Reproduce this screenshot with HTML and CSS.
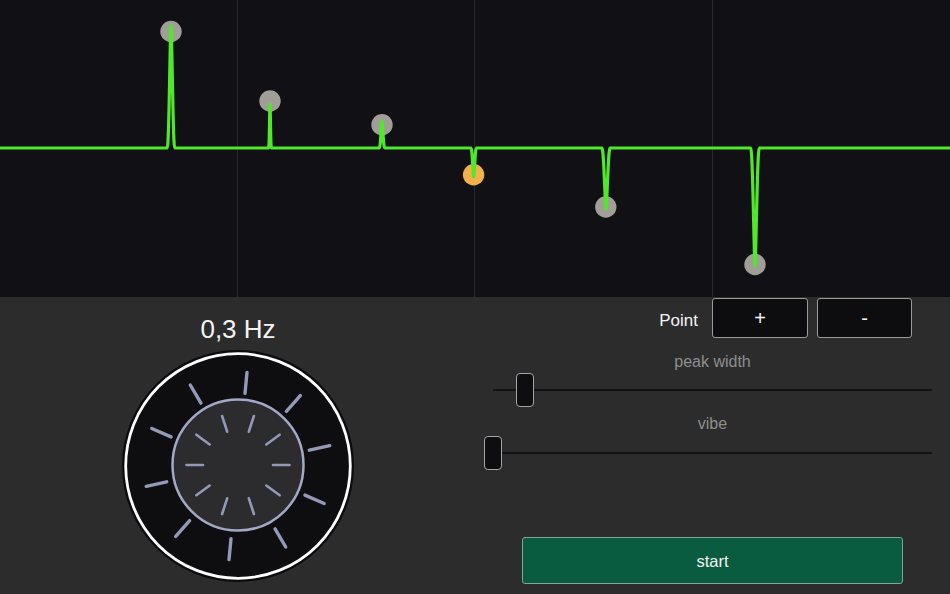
FILE: index.html
```html
<!DOCTYPE html>
<html>
<head>
<meta charset="utf-8">
<link rel="stylesheet" href="styles.css">
</head>
<body>
<div class="app">
  <div class="graph">
    <svg class="graph-svg" width="950" height="297" viewBox="0 0 950 297">
      <line class="grid" x1="237.5" y1="0" x2="237.5" y2="297"/>
      <line class="grid" x1="474.5" y1="0" x2="474.5" y2="297"/>
      <line class="grid" x1="712.5" y1="0" x2="712.5" y2="297"/>
      <circle class="pt" cx="171" cy="31.5" r="10.7"/>
      <circle class="pt" cx="270" cy="101" r="10.7"/>
      <circle class="pt" cx="382" cy="124.8" r="10.7"/>
      <circle class="pt active" cx="473.6" cy="174.8" r="10.7"/>
      <circle class="pt" cx="605.8" cy="207" r="10.7"/>
      <circle class="pt" cx="755" cy="264.5" r="10.7"/>
      <path class="wave" d="M-2,148 L167.3,148 C169,148 170.2,26 171,26 C171.8,26 173,148 174.7,148
        L268.6,148 C269.4,148 269.7,104 270,104 C270.3,104 270.6,148 271.4,148
        L379.4,148 C380.6,148 381.4,121 382,121 C382.6,121 383.4,148 384.6,148
        L471.1,148 C472.3,148 473.1,177 473.7,177 C474.3,177 475.1,148 476.3,148
        L602,148 C603.8,148 605.2,209 606,209 C606.8,209 608.2,148 610,148
        L750.8,148 C752.7,148 754.2,266 755,266 C755.8,266 757.3,148 759.2,148
        L952,148"/>
    </svg>
  </div>
  <div class="panel">
    <div class="left">
      <div class="freq">0,3 Hz</div>
      <svg class="knob" width="236" height="236" viewBox="0 0 236 236">
        <circle class="knob-edge" cx="118" cy="118" r="116"/>
        <circle class="knob-ring" cx="118" cy="118" r="112.3"/>
        <g class="ticks-outer">
          <line x1="118" y1="45" x2="118" y2="24" transform="rotate(5.5 118 118)"/>
          <line x1="118" y1="45" x2="118" y2="24" transform="rotate(41.5 118 118)"/>
          <line x1="118" y1="45" x2="118" y2="24" transform="rotate(77.5 118 118)"/>
          <line x1="118" y1="45" x2="118" y2="24" transform="rotate(113.5 118 118)"/>
          <line x1="118" y1="45" x2="118" y2="24" transform="rotate(149.5 118 118)"/>
          <line x1="118" y1="45" x2="118" y2="24" transform="rotate(185.5 118 118)"/>
          <line x1="118" y1="45" x2="118" y2="24" transform="rotate(221.5 118 118)"/>
          <line x1="118" y1="45" x2="118" y2="24" transform="rotate(257.5 118 118)"/>
          <line x1="118" y1="45" x2="118" y2="24" transform="rotate(293.5 118 118)"/>
          <line x1="118" y1="45" x2="118" y2="24" transform="rotate(329.5 118 118)"/>
        </g>
        <circle class="knob-inner" cx="118" cy="117" r="65.5"/>
        <g class="ticks-inner">
          <line x1="118" y1="82" x2="118" y2="65.5" transform="rotate(18 118 117)"/>
          <line x1="118" y1="82" x2="118" y2="65.5" transform="rotate(54 118 117)"/>
          <line x1="118" y1="82" x2="118" y2="65.5" transform="rotate(90 118 117)"/>
          <line x1="118" y1="82" x2="118" y2="65.5" transform="rotate(126 118 117)"/>
          <line x1="118" y1="82" x2="118" y2="65.5" transform="rotate(162 118 117)"/>
          <line x1="118" y1="82" x2="118" y2="65.5" transform="rotate(198 118 117)"/>
          <line x1="118" y1="82" x2="118" y2="65.5" transform="rotate(234 118 117)"/>
          <line x1="118" y1="82" x2="118" y2="65.5" transform="rotate(270 118 117)"/>
          <line x1="118" y1="82" x2="118" y2="65.5" transform="rotate(306 118 117)"/>
          <line x1="118" y1="82" x2="118" y2="65.5" transform="rotate(342 118 117)"/>
        </g>
      </svg>
    </div>
    <div class="right">
      <div class="point-row">
        <span class="point-label">Point</span>
        <button class="btn btn-plus">+</button>
        <button class="btn btn-minus">-</button>
      </div>
      <div class="slider-label label-peak">peak width</div>
      <div class="slider slider-peak">
        <div class="track"></div>
        <div class="thumb" style="left: 23px"></div>
      </div>
      <div class="slider-label label-vibe">vibe</div>
      <div class="slider slider-vibe">
        <div class="track"></div>
        <div class="thumb" style="left: -9px"></div>
      </div>
      <button class="start">start</button>
    </div>
  </div>
</div>
</body>
</html>
```

FILE: styles.css
```css
html, body {
  margin: 0;
  padding: 0;
  background: #2c2c2c;
}

body {
  width: 950px;
  height: 594px;
  overflow: hidden;
  font-family: "Liberation Sans", Arial, sans-serif;
}

.app {
  display: flex;
  flex-direction: column;
  width: 950px;
  height: 594px;
}

.graph {
  height: 297px;
  background: #111014;
  flex: none;
}

.graph-svg {
  display: block;
}

.grid {
  stroke: #2a292d;
  stroke-width: 1;
}

.pt {
  fill: #a19e97;
}

.pt.active {
  fill: #f2b14b;
}

.wave {
  fill: none;
  stroke: #4fe82a;
  stroke-width: 3.2;
  stroke-linejoin: round;
  stroke-linecap: round;
}

.panel {
  flex: 1;
  display: grid;
  grid-template-columns: 475px 475px;
  background: #2c2c2c;
}

.left {
  display: flex;
  flex-direction: column;
  align-items: center;
  padding-top: 17px;
  padding-left: 1px;
}

.freq {
  color: #f4f4f4;
  font-size: 26px;
  line-height: 30px;
  height: 30px;
}

.knob {
  display: block;
  margin-top: 4px;
}

.knob-edge {
  fill: #0c0c0e;
}

.knob-ring {
  fill: #0e0e10;
  stroke: #ffffff;
  stroke-width: 2.8;
}

.knob-inner {
  fill: #2c2c2e;
  stroke: #a3a8c6;
  stroke-width: 2.5;
}

.ticks-outer line {
  stroke: #9499b7;
  stroke-width: 3.4;
  stroke-linecap: round;
}

.ticks-inner line {
  stroke: #9499b7;
  stroke-width: 2.6;
  stroke-linecap: round;
}

.right {
  display: flex;
  flex-direction: column;
}

.point-row {
  display: flex;
  align-items: center;
  justify-content: flex-end;
  margin-top: 1px;
  padding-right: 38px;
  height: 40px;
}

.point-label {
  color: #f4f4f4;
  font-size: 17px;
  margin-right: 14px;
  padding-top: 6px;
}

.btn {
  box-sizing: border-box;
  height: 40px;
  background: #0d0d0f;
  border: 1px solid #9b9b9b;
  border-radius: 3px;
  color: #f4f4f4;
  font-family: "Liberation Sans", Arial, sans-serif;
  font-size: 20px;
  padding: 0;
}

.btn-plus {
  width: 96px;
  margin-right: 9px;
}

.btn-minus {
  width: 95px;
}

.slider-label {
  color: #8e8e8e;
  font-size: 16px;
  line-height: 20px;
  text-align: center;
}

.label-peak {
  margin-top: 14px;
}

.label-vibe {
  margin-top: 7px;
}

.slider {
  position: relative;
  height: 34px;
  margin-left: 18px;
  margin-right: 18px;
  display: flex;
  align-items: center;
}

.slider-peak {
  margin-top: 1px;
}

.slider-vibe {
  margin-top: 2px;
}

.track {
  flex: 1;
  height: 2px;
  background: #121214;
}

.thumb {
  position: absolute;
  top: 0;
  box-sizing: border-box;
  width: 18px;
  height: 34px;
  background: #0e0e10;
  border: 1.5px solid #a6a6a6;
  border-radius: 4px;
}

.start {
  box-sizing: border-box;
  margin-top: 67px;
  margin-left: 47px;
  width: 381px;
  height: 47px;
  background: #0a5c40;
  border: 1px solid #7ea595;
  border-radius: 3px;
  color: #f4f4f4;
  font-family: "Liberation Sans", Arial, sans-serif;
  font-size: 16.5px;
  padding: 2px 0 0 0;
}
```
